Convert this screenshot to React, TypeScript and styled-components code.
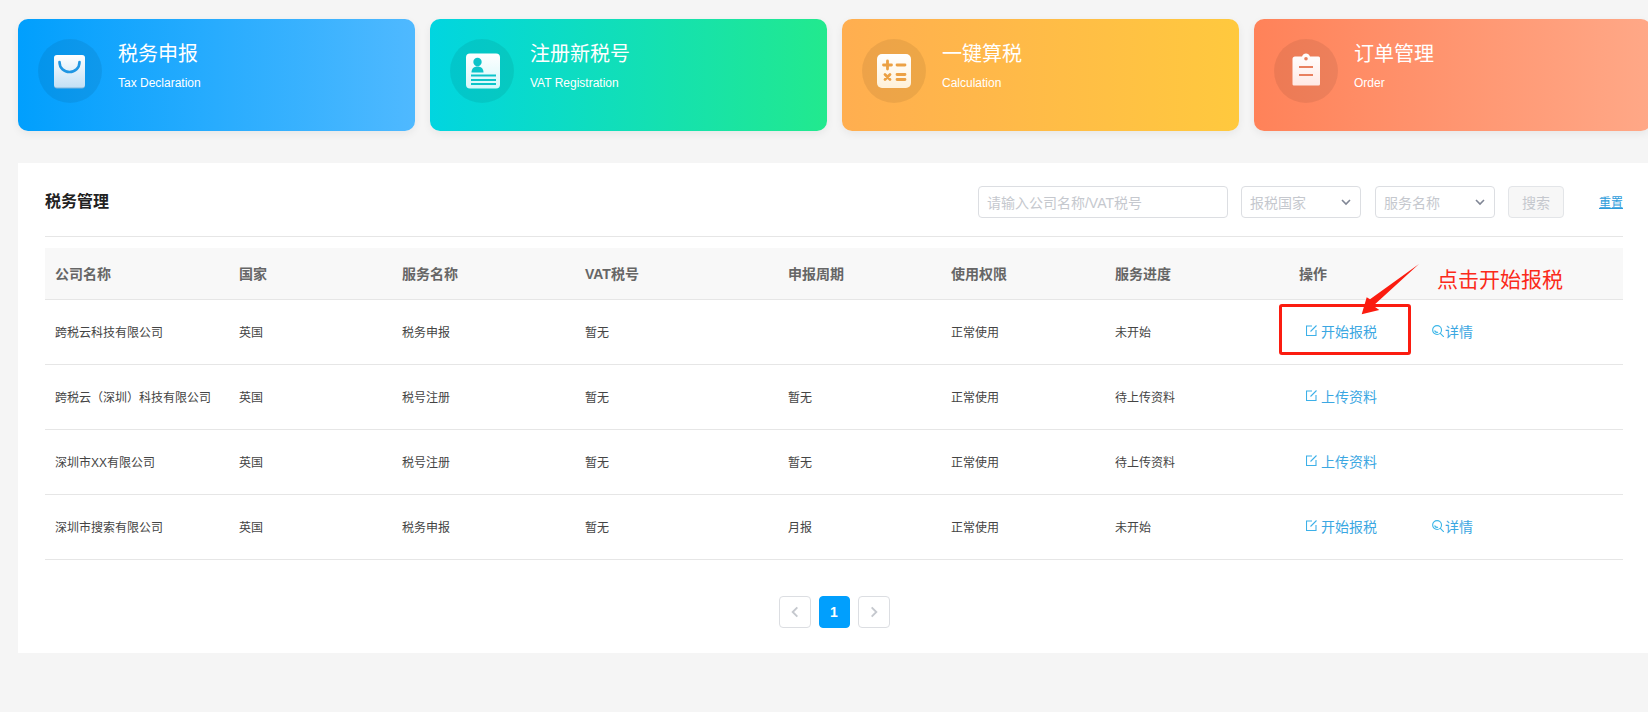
import { ReactElement, ReactNode } from 'react'
import styled, { createGlobalStyle } from 'styled-components'

const GlobalStyle = createGlobalStyle`
  html, body {
    margin: 0;
    padding: 0;
    height: 100%;
    overflow: hidden;
    background: #f5f5f5;
  }
  * {
    box-sizing: border-box;
  }
`

const FONT = `"Liberation Sans", "Noto Sans CJK SC", sans-serif`

const Page = styled.div`
  width: 1651px;
  padding: 19px 0 0 18px;
  font-family: ${FONT};
  position: relative;
`

const Cards = styled.div`
  display: flex;
  gap: 15px;
`

const Card = styled.div<{ $from: string; $to: string }>`
  width: 397px;
  height: 112px;
  flex: none;
  display: flex;
  padding: 20px 0 0 20px;
  border-radius: 10px;
  background: linear-gradient(90deg, ${(p) => p.$from}, ${(p) => p.$to});
  box-shadow: 0 3px 8px rgba(0, 0, 0, 0.06);
  color: #fff;
`

const IconCircle = styled.div`
  width: 64px;
  height: 64px;
  flex: none;
  display: flex;
  align-items: center;
  justify-content: center;
  border-radius: 50%;
  background: rgba(0, 0, 0, 0.07);
`

const CardText = styled.div`
  margin-left: 16px;
  padding-top: 1px;
`

const CardTitle = styled.div`
  font-size: 20px;
  line-height: 28px;
`

const CardSub = styled.div`
  font-size: 12px;
  line-height: 16px;
  margin-top: 7px;
`

const Panel = styled.section`
  width: 1633px;
  height: 490px;
  margin-top: 32px;
  padding: 0 28px 0 27px;
  background: #fff;
`

const PanelHead = styled.div`
  height: 74px;
  display: flex;
  align-items: center;
  justify-content: space-between;
  border-bottom: 1px solid #e6e6e6;
`

const PanelTitle = styled.h2`
  margin: 0;
  font-size: 16px;
  font-weight: 700;
  color: #222;
`

const Filters = styled.div`
  display: flex;
  align-items: center;
  margin-top: 4px;
`

const SearchInput = styled.div`
  width: 250px;
  height: 32px;
  display: flex;
  align-items: center;
  padding: 0 8px;
  border: 1px solid #dcdee2;
  border-radius: 4px;
  font-size: 14px;
  color: #c5c8ce;
  background: #fff;
`

const Select = styled.div<{ $gap: number }>`
  width: 120px;
  height: 32px;
  margin-left: ${(p) => p.$gap}px;
  display: flex;
  align-items: center;
  justify-content: space-between;
  padding: 0 8px;
  border: 1px solid #dcdee2;
  border-radius: 4px;
  font-size: 14px;
  color: #c5c8ce;
  background: #fff;
`

const SearchButton = styled.div`
  width: 56px;
  height: 32px;
  margin-left: 13px;
  display: flex;
  align-items: center;
  justify-content: center;
  border: 1px solid #e3e5e8;
  border-radius: 4px;
  font-size: 14px;
  color: #c5c8ce;
  background: #f7f7f7;
`

const ResetLink = styled.a`
  margin-left: 35px;
  font-size: 12px;
  color: #2d9cdb;
  text-decoration: underline;
  text-underline-offset: 1px;
`

const Table = styled.table`
  width: 1578px;
  margin-top: 11px;
  border-collapse: collapse;
  table-layout: fixed;
`

const HeadCell = styled.th`
  height: 51px;
  padding: 0 10px;
  text-align: left;
  font-size: 14px;
  font-weight: 700;
  color: #666;
  background: #f8f8f8;
  border-bottom: 1px solid #e6e6e6;
`

const Cell = styled.td`
  height: 65px;
  padding: 0 10px;
  font-size: 12px;
  color: #444;
  border-bottom: 1px solid #e6e6e6;
  white-space: nowrap;
`

const ActionLink = styled.a<{ $left: number; $gap: number }>`
  display: inline-flex;
  align-items: center;
  gap: ${(p) => p.$gap}px;
  margin-left: ${(p) => p.$left}px;
  margin-bottom: 2px;
  font-size: 14px;
  color: #3ba7e2;
  vertical-align: middle;
`

const Pager = styled.div`
  display: flex;
  justify-content: center;
  gap: 8px;
  margin-top: 36px;
`

const PageButton = styled.div<{ $active?: boolean }>`
  width: ${(p) => (p.$active ? 31 : 32)}px;
  height: 32px;
  display: flex;
  align-items: center;
  justify-content: center;
  border: 1px solid ${(p) => (p.$active ? '#019ffd' : '#dcdee2')};
  border-radius: 4px;
  background: ${(p) => (p.$active ? '#019ffd' : '#fff')};
  color: ${(p) => (p.$active ? '#fff' : '#c5c8ce')};
  font-size: 14px;
  font-weight: 700;
`

const Callout = styled.div`
  position: absolute;
  left: 1279px;
  top: 304px;
  width: 132px;
  height: 51px;
  border: 3px solid #fb1c10;
  border-radius: 3px;
  pointer-events: none;
`

const CalloutArrow = styled.svg`
  position: absolute;
  left: 1355px;
  top: 260px;
  pointer-events: none;
`

const CalloutText = styled.div`
  position: absolute;
  left: 1437px;
  top: 265px;
  font-size: 21px;
  line-height: 30px;
  color: #fb2a1a;
  white-space: nowrap;
`

const BagIcon = (): ReactElement => (
  <svg width="40" height="40" viewBox="0 0 40 40" fill="none">
    <defs>
      <linearGradient id="bag" x1="0" y1="0" x2="0" y2="1">
        <stop offset="0" stopColor="#ffffff" />
        <stop offset="1" stopColor="#c3e0f5" />
      </linearGradient>
    </defs>
    <rect x="4" y="4.500" width="31" height="33" rx="3" fill="#7fb6dc" />
    <rect x="4" y="4" width="31" height="32.500" rx="3" fill="url(#bag)" />
    <path d="M9.500 11c0 6 4.500 10 10 10s10-4 10-10" stroke="#1f96e3" strokeWidth="2.600" strokeLinecap="round" />
  </svg>
)

const IdIcon = (): ReactElement => (
  <svg width="40" height="40" viewBox="0 0 40 40" fill="none">
    <defs>
      <linearGradient id="idc" x1="0" y1="0" x2="0" y2="1">
        <stop offset="0" stopColor="#ffffff" />
        <stop offset="1" stopColor="#d5f8fa" />
      </linearGradient>
    </defs>
    <rect x="4" y="2.500" width="34" height="35" rx="4" fill="url(#idc)" />
    <circle cx="15.500" cy="11" r="4.200" fill="#0cc4c9" />
    <path d="M9.500 21.500c0-4 2.500-6 6-6s6 2 6 6z" fill="#0cc4c9" />
    <path d="M9 24.500h25M9 29h25M9 33h25" stroke="#0cc4c9" strokeWidth="1.800" />
  </svg>
)

const CalcIcon = (): ReactElement => (
  <svg width="40" height="40" viewBox="0 0 40 40" fill="none">
    <defs>
      <linearGradient id="calc" x1="0" y1="0" x2="0" y2="1">
        <stop offset="0" stopColor="#ffffff" />
        <stop offset="1" stopColor="#fff1d8" />
      </linearGradient>
    </defs>
    <rect x="3" y="3" width="34" height="34" rx="5" fill="url(#calc)" />
    <path
      d="M13.500 10v8M9.500 14h8M23 14h8M11 23.500l5 5M16 23.500l-5 5M23 23.500h8M23 28.500h8"
      stroke="#eca144"
      strokeWidth="2.800"
      strokeLinecap="round"
    />
  </svg>
)

const ClipboardIcon = (): ReactElement => (
  <svg width="40" height="40" viewBox="0 0 40 40" fill="none">
    <defs>
      <linearGradient id="clip" x1="0" y1="0" x2="0" y2="1">
        <stop offset="0" stopColor="#ffffff" />
        <stop offset="1" stopColor="#ffe9e4" />
      </linearGradient>
    </defs>
    <path
      d="M9 5.500h7c.800-2 2-3 4-3s3.200 1 4 3h8.500a1.500 1.500 0 0 1 1.500 1.500v26a1.500 1.500 0 0 1-1.500 1.500h-25A1.500 1.500 0 0 1 6.500 33V8c0-1.500 1-2.500 2.500-2.500z"
      fill="url(#clip)"
    />
    <circle cx="20" cy="7.700" r="1.800" fill="#e8805f" />
    <path d="M13 16h14M13 24h14" stroke="#e8805f" strokeWidth="2" />
  </svg>
)

const EditIcon = (): ReactElement => (
  <svg width="11" height="11" viewBox="0 0 11 11" fill="none" stroke="#3cb0e8" strokeWidth="1.100">
    <path d="M6 1H0.500V10.500H10V5" />
    <path d="M4.500 6.500L10.500 0.500" />
  </svg>
)

const DetailIcon = (): ReactElement => (
  <svg width="12" height="12" viewBox="0 0 13 13" fill="none" stroke="#3cb6e8" strokeWidth="1.200">
    <circle cx="5.500" cy="5.500" r="4.800" />
    <path d="M9 9L12.500 12.500" strokeLinecap="round" />
    <path d="M2.800 6c.5 1.500 2 2.200 3.800 1.800" />
  </svg>
)

const Chevron = ({ dir, color, size }: { dir: 'down' | 'left' | 'right'; color: string; size: number }): ReactElement => {
  const d = dir === 'down' ? 'M2 4L6 8L10 4' : dir === 'left' ? 'M8 2L4 6L8 10' : 'M4 2L8 6L4 10'
  return (
    <svg width={size} height={size} viewBox="0 0 12 12" fill="none" stroke={color} strokeWidth="1.600">
      <path d={d} />
    </svg>
  )
}

const CARDS: { title: string; sub: string; from: string; to: string; icon: ReactNode }[] = [
  { title: '税务申报', sub: 'Tax Declaration', from: '#019ffd', to: '#4fb9ff', icon: <BagIcon /> },
  { title: '注册新税号', sub: 'VAT Registration', from: '#01d5e0', to: '#22e98e', icon: <IdIcon /> },
  { title: '一键算税', sub: 'Calculation', from: '#ffae50', to: '#ffc93e', icon: <CalcIcon /> },
  { title: '订单管理', sub: 'Order', from: '#ff8259', to: '#ffa887', icon: <ClipboardIcon /> },
]

const COLUMNS: { label: string; width: number }[] = [
  { label: '公司名称', width: 184 },
  { label: '国家', width: 163 },
  { label: '服务名称', width: 183 },
  { label: 'VAT税号', width: 203 },
  { label: '申报周期', width: 163 },
  { label: '使用权限', width: 164 },
  { label: '服务进度', width: 184 },
  { label: '操作', width: 334 },
]

const ROWS = [
  { company: '跨税云科技有限公司', service: '税务申报', period: '', progress: '未开始', action: '开始报税', detail: true },
  { company: '跨税云（深圳）科技有限公司', service: '税号注册', period: '暂无', progress: '待上传资料', action: '上传资料', detail: false },
  { company: '深圳市XX有限公司', service: '税号注册', period: '暂无', progress: '待上传资料', action: '上传资料', detail: false },
  { company: '深圳市搜索有限公司', service: '税务申报', period: '月报', progress: '未开始', action: '开始报税', detail: true },
]

export default function App(): ReactElement {
  return (
    <Page>
      <GlobalStyle />
      <Cards>
        {CARDS.map((card) => (
          <Card key={card.title} $from={card.from} $to={card.to}>
            <IconCircle>{card.icon}</IconCircle>
            <CardText>
              <CardTitle>{card.title}</CardTitle>
              <CardSub>{card.sub}</CardSub>
            </CardText>
          </Card>
        ))}
      </Cards>

      <Panel>
        <PanelHead>
          <PanelTitle>税务管理</PanelTitle>
          <Filters>
            <SearchInput>请输入公司名称/VAT税号</SearchInput>
            <Select $gap={13}>
              报税国家
              <Chevron dir="down" color="#808695" size={12} />
            </Select>
            <Select $gap={14}>
              服务名称
              <Chevron dir="down" color="#808695" size={12} />
            </Select>
            <SearchButton>搜索</SearchButton>
            <ResetLink>重置</ResetLink>
          </Filters>
        </PanelHead>

        <Table>
          <colgroup>
            {COLUMNS.map((col) => (
              <col key={col.label} width={col.width} />
            ))}
          </colgroup>
          <thead>
            <tr>
              {COLUMNS.map((col) => (
                <HeadCell key={col.label}>{col.label}</HeadCell>
              ))}
            </tr>
          </thead>
          <tbody>
            {ROWS.map((row) => (
              <tr key={row.company}>
                <Cell>{row.company}</Cell>
                <Cell>英国</Cell>
                <Cell>{row.service}</Cell>
                <Cell>暂无</Cell>
                <Cell>{row.period}</Cell>
                <Cell>正常使用</Cell>
                <Cell>{row.progress}</Cell>
                <Cell>
                  <ActionLink $left={7} $gap={4}>
                    <EditIcon />
                    {row.action}
                  </ActionLink>
                  {row.detail && (
                    <ActionLink $left={55} $gap={1}>
                      <DetailIcon />
                      详情
                    </ActionLink>
                  )}
                </Cell>
              </tr>
            ))}
          </tbody>
        </Table>

        <Pager>
          <PageButton>
            <Chevron dir="left" color="#c5c8ce" size={14} />
          </PageButton>
          <PageButton $active>1</PageButton>
          <PageButton>
            <Chevron dir="right" color="#c5c8ce" size={14} />
          </PageButton>
        </Pager>
      </Panel>

      <Callout />
      <CalloutArrow width="70" height="60" viewBox="0 0 70 60">
        <path d="M64 4L15 39.300L11.700 37.300L6.700 54.300L24.300 50L18.300 45.700z" fill="#fb1c10" />
      </CalloutArrow>
      <CalloutText>点击开始报税</CalloutText>
    </Page>
  )
}
